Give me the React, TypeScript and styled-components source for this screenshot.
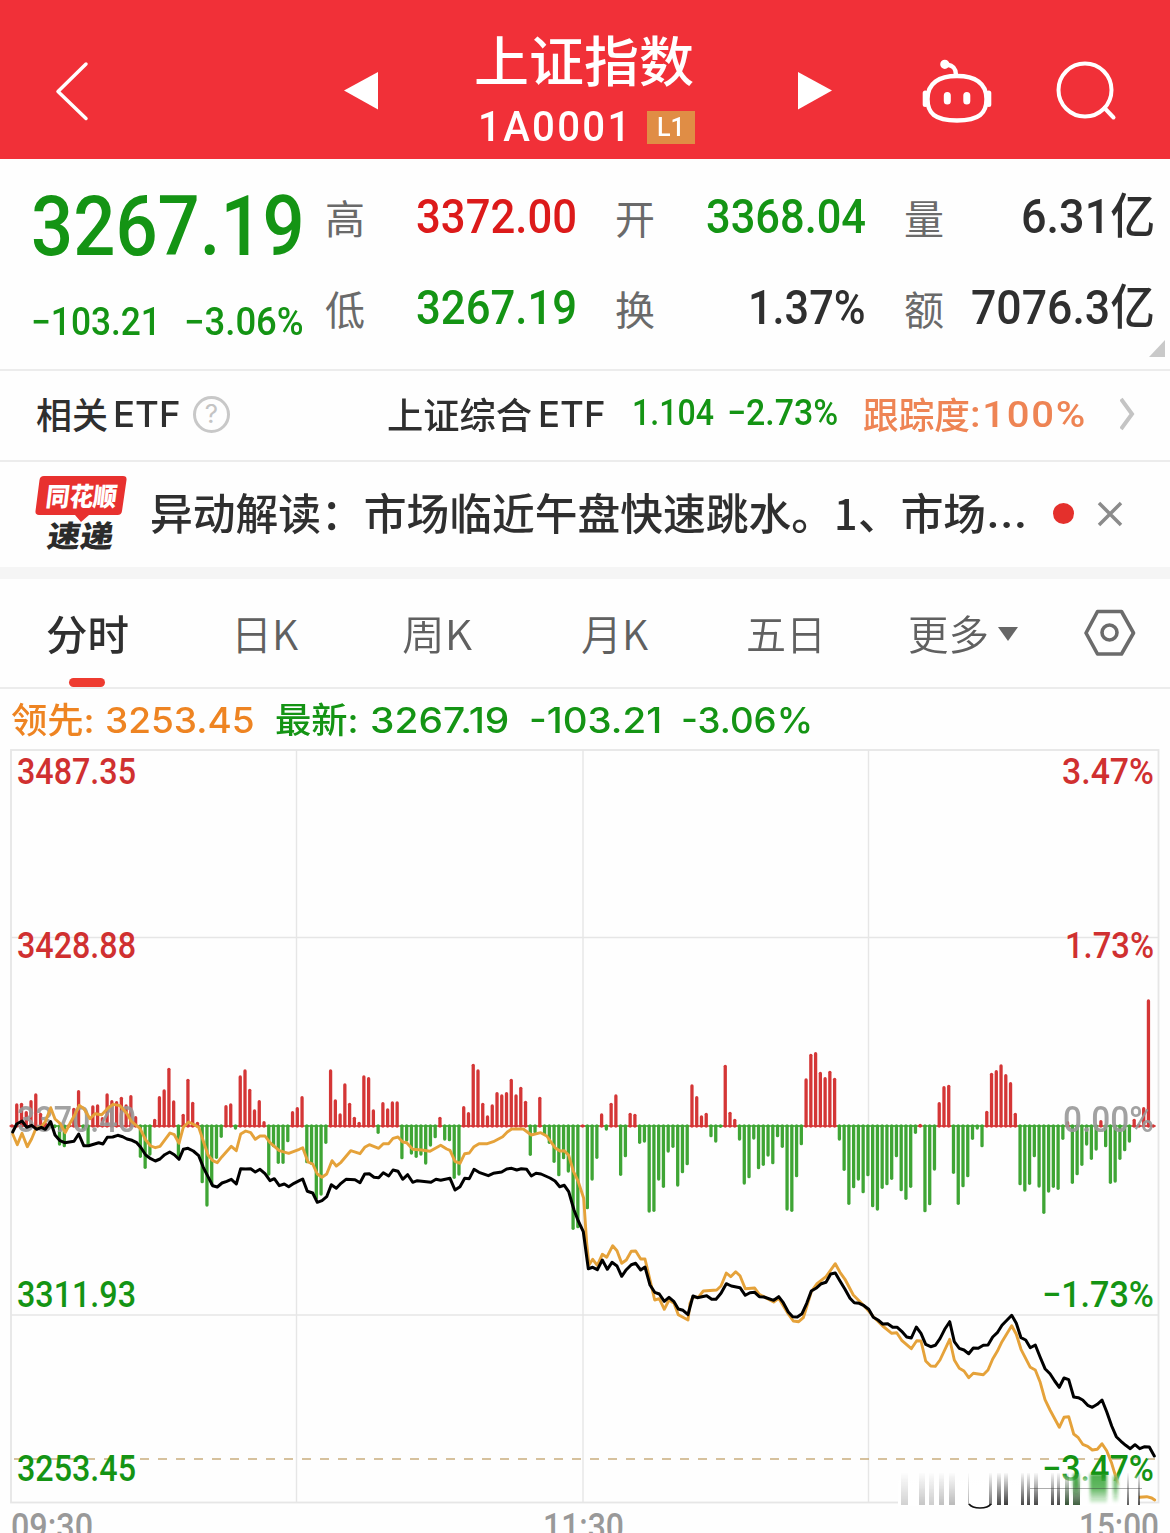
import React, { useLayoutEffect, useRef, useState } from "react";
import styled, { createGlobalStyle } from "styled-components";

const GREEN = "#149414";
const RED = "#dc1a1a";
const INK = "#2f2f2f";

const din = `Roboto, "Noto Sans CJK SC", sans-serif`;
const ui = `Inter, "Noto Sans CJK SC", sans-serif`;
const cjk = `"Noto Sans CJK SC", sans-serif`;

const GlobalStyle = createGlobalStyle`
  body { margin: 0; background: #fff; }
  * { box-sizing: border-box; }
`;

/* ---------- text fitted to a column ---------- */
const FitBox = styled.span<{ $w: number; $ml: number; $dy: number }>`
  display: block;
  flex: none;
  width: ${(p) => p.$w}px;
  margin-left: ${(p) => p.$ml}px;
  margin-top: ${(p) => p.$dy}px;
`;
const FitInner = styled.span<{ $size: number; $weight: number; $color: string; $font: string; $ls: number }>`
  display: inline-block;
  white-space: pre;
  transform-origin: 0 50%;
  vertical-align: top;
  font: ${(p) => p.$weight} ${(p) => p.$size}px/1 ${(p) => p.$font};
  letter-spacing: ${(p) => p.$ls}px;
  color: ${(p) => p.$color};
`;
type FitProps = {
  w: number;
  size: number;
  ml?: number;
  dy?: number;
  weight?: number;
  color?: string;
  font?: string;
  ls?: number;
  children: React.ReactNode;
};
function Fit({ w, size, ml = 0, dy = 0, weight = 500, color = INK, font = cjk, ls = 0, children }: FitProps) {
  const ref = useRef<HTMLSpanElement>(null);
  const [scale, setScale] = useState(1);
  useLayoutEffect(() => {
    const el = ref.current;
    if (el && el.offsetWidth) setScale(w / el.offsetWidth);
  }, [w, size]);
  return (
    <FitBox $w={w} $ml={ml} $dy={dy}>
      <FitInner ref={ref} $size={size} $weight={weight} $color={color} $font={font} $ls={ls} style={{ transform: `scaleX(${scale})` }}>
        {children}
      </FitInner>
    </FitBox>
  );
}

/* ---------- layout ---------- */
const Page = styled.main`
  width: 1170px;
  height: 1533px;
  overflow: hidden;
  background: #fefefe;
  display: flex;
  flex-direction: column;
`;
const Header = styled.header`
  flex: none;
  height: 159px;
  background: #f13038;
  display: grid;
  grid-template-columns: 344px 130px 322px 124px 136px 1fr;
`;
const IconCell = styled.div<{ $top: number; $left?: number }>`
  padding: ${(p) => p.$top}px 0 0 ${(p) => p.$left ?? 0}px;
  svg { display: block; }
`;
const TitleBlock = styled.div`
  padding-top: 32px;
`;
const CodeLine = styled.div`
  display: flex;
  align-items: center;
  margin-top: 23px;
  height: 36px;
`;
const Badge = styled.span`
  margin-left: 14px;
  width: 48px;
  height: 33px;
  background: #e08d45;
  display: flex;
  align-items: center;
`;
const Quote = styled.section`
  flex: none;
  height: 212px;
  border-bottom: 2px solid #ececec;
  display: grid;
  grid-template-columns: 325px 290px 289px 266px;
`;
const PriceCol = styled.div`
  padding: 26px 0 0 31px;
`;
const ChangeLine = styled.div`
  display: flex;
  margin-top: 34px;
`;
const StatCol = styled.div`
  padding-top: 35px;
  display: flex;
  flex-direction: column;
  gap: 43px;
`;
const Stat = styled.div`
  height: 48px;
  display: flex;
  align-items: center;
`;
const Corner = styled.i`
  align-self: flex-end;
  margin: -36px 5px 0 0;
  border-left: 16px solid transparent;
  border-bottom: 17px solid #c9c9c9;
`;
const EtfRow = styled.section`
  flex: none;
  height: 91px;
  border-bottom: 2px solid #ececec;
  display: flex;
  align-items: center;
  padding: 0 0 3px 36px;
`;
const Help = styled.span`
  flex: none;
  width: 37px;
  height: 37px;
  margin-left: 13px;
  border: 3px solid #c8c8c8;
  border-radius: 50%;
  display: flex;
  justify-content: center;
  align-items: center;
  font: 400 26px/1 ${ui};
  color: #c4c4c4;
`;
const More = styled.svg`
  flex: none;
  margin-left: 33px;
`;
const NewsRow = styled.section`
  flex: none;
  height: 117px;
  border-bottom: 12px solid #f5f5f5;
  display: flex;
  align-items: center;
  padding: 0 0 2px 32px;
`;
const LogoSvg = styled.svg`
  flex: none;
  overflow: visible;
`;
const Dot = styled.span`
  flex: none;
  width: 21px;
  height: 21px;
  margin-left: 26px;
  border-radius: 50%;
  background: #e4302c;
`;
const Close = styled.svg`
  flex: none;
  margin-left: 23px;
`;
const Tabs = styled.nav`
  flex: none;
  height: 110px;
  border-bottom: 2px solid #ececec;
  display: grid;
  grid-template-columns: 231px 171px 179px 165px 162px 176px 1fr;
`;
const Tab = styled.div<{ $left?: number }>`
  display: flex;
  align-items: flex-start;
  padding: 33px 0 0 ${(p) => p.$left ?? 0}px;
`;
const ActiveTab = styled(Tab)`
  flex-direction: column;
`;
const Marker = styled.i`
  width: 36px;
  height: 9px;
  border-radius: 5px;
  background: #ee3b30;
  margin: 25px 0 0 23px;
`;
const Caret = styled.i`
  margin: 15px 0 0 9px;
  border: 10px solid transparent;
  border-top: 14px solid #666;
  border-bottom: 0;
`;
const Legend = styled.div`
  flex: none;
  height: 59px;
  display: flex;
  align-items: center;
  padding: 4px 0 0 11px;
`;
const ChartSvg = styled.svg`
  display: block;
  flex: none;
  overflow: visible;
`;

/* ---------- icons ---------- */
const Robot = () => (
  <svg width="76" height="66" viewBox="920 58 76 66" fill="none" stroke="#fff" strokeWidth="4.4" strokeLinecap="round">
    <path d="M957 76c-18 0-29.500 7-29.500 23 0 14 7 21.500 29.500 21.500s29.500-7.500 29.500-21.500c0-16-11.500-23-29.500-23Z" />
    <path d="M956 75c0-7-3-9.500-9-10.500" />
    <circle cx="944.800" cy="64.300" r="2.400" fill="#fff" />
    <path d="M925.200 93v11.500M988.800 93v11.500" strokeWidth="5" />
    <path d="M947.300 95.500v5.500M966.800 95.500v5.500" strokeWidth="7" />
  </svg>
);

const Logo = () => (
  <LogoSvg width="98" height="80" viewBox="32 473 98 80">
    <path d="M44 475h79q4 0 3.500 4l-4.500 31q-.5 4-4.500 4H89l-8 7-6-7H39q-4 0-3.500-4l4-31q.5-4 4.500-4Z" fill="#e8312f" />
    <g fontFamily={cjk} fontWeight="900">
      <text transform="translate(45 505) skewX(-7)" fontSize="26" fill="#fff" textLength="71" lengthAdjust="spacingAndGlyphs">同花顺</text>
      <text transform="translate(46 546) skewX(-9)" fontSize="30" fill="#2b2b2b" textLength="66" lengthAdjust="spacingAndGlyphs">速递</text>
    </g>
  </LogoSvg>
);

/* ---------- chart data, in thirds of a pixel ---------- */
const bars = [
  0, 66, 68, 43, 76, 96, 38, 10, -2, -5, -57, -62, 5, 53, 106, -10, -55, 60, 63, 25, 96, 76, 73, 86, 63, 91, 28, -94, -127, -87,
  20, 88, 108, 173, 75, -90, 35, 140, 71, 11, -170, -240, -177, -97, -34, 61, 66, -9, 150, 168, 110, 48, 76, 13, -147, -62, -112, -112, -47, 43,
  55, 88, -110, -115, -220, -207, -52, 168, 78, 36, 126, 68, 26, 11, 150, 145, 48, -22, 70, 51, 72, 72, -98, -45, -84, -94, -87, -114, -60, -35,
  26, -42, -44, -157, -147, 58, 40, 185, 168, 68, 30, 63, 100, 93, 100, 140, 93, 116, 74, -88, -20, 86, -25, -52, -109, -149, -98, -138, -310, -305,
  2, -248, -162, -97, 36, -12, 68, 93, -148, -92, 38, 35, -52, -48, -258, -256, -162, -184, -78, -64, -180, -140, -116, 123, 88, 30, 38, -32, -48, -4,
  182, 41, 20, -42, -174, -155, -39, -128, -118, -90, -113, -32, -64, -252, -256, -152, -56, 141, 215, 220, 161, 145, 164, 143, -42, -133, -235, -185, -162, -200,
  -149, -242, -252, -187, -176, -160, -92, -194, -220, -184, -22, 5, -257, -236, -132, 70, 118, 122, -142, -235, -182, -152, -40, -9, -62, 44, 158, 166, 183, 154,
  130, 38, -176, -195, -175, -92, -183, -262, -198, -184, -190, -40, 13, -172, -146, -118, -57, -100, -72, 16, -62, -172, -168, -100, -74, -48, 20, 5, 55, 378, 3,
];

type Segment = { ox: number; oy: number; pts: string };
const indexLine: Segment[] = [
  { ox: 0, oy: 3120, pts: "38,276 50,252 66,243 80,262 95,256 110,268 124,262 136,268 152,245 165,285 180,302 194,308 222,304 236,282 251,317 266,317 296,308 309,312 322,292 338,291 353,286 368,290 381,297 396,301 410,308 422,322 437,345 452,356 466,363 480,357 494,344 509,336 523,344 537,358 550,328 564,325 580,333 596,347 610,382 624,410 638,437 652,441 666,429 680,424 694,418 709,432 722,386 737,387 752,386 766,396 780,388 795,401 810,422 823,416 838,437 853,432 866,440 882,430 898,422" },
  { ox: 900, oy: 3120, pts: "8,417 22,454 38,459 52,487 66,482 80,470 94,434 109,445 123,430 138,418 165,419 180,428 194,402 208,401 222,412 236,413 250,398 266,408 279,390 294,394 308,418 323,404 338,427 352,422 393,427 408,418 422,421 450,415 465,450 480,440 494,415 508,416 522,388 537,397 565,407 580,400 605,396 620,387 635,385 650,390 664,386 680,388 694,408 708,400 723,402 750,414 765,423 779,440 793,436 806,455 822,510 835,543 850,575 865,686" },
  { ox: 1770, oy: 3120, pts: "8,682 22,689 37,660 52,688 66,667 81,678 95,709 109,689 124,674 137,670 152,690 165,681 180,735 194,757 208,762 223,784 237,772 252,785 265,807 279,811 294,824 309,768 322,773 350,767 365,778 378,778 393,760 409,731 424,738 450,743 466,766 480,758 494,757 508,770 522,771 551,781 566,770 580,788 595,816 608,830 622,831 636,821 650,790 664,753 678,745 694,731 708,727 722,702 736,699 750,723 765,748 780,775 793,788 808,790 822,797 836,808 850,832 864,840 878,852 893,851" },
  { ox: 2550, oy: 3870, pts: "128,112 142,112 155,124 170,141 184,144 199,111 213,130 227,163 242,170 256,166 270,146 284,118 299,95 313,155 328,175 342,180 356,191 370,174 385,175 400,166 414,165 428,141 442,128 456,106 485,76 499,100 513,143 527,150 541,173 556,165 570,200 585,236 600,251 614,273 628,292 642,264 656,269 671,321 685,323 698,330 713,346 727,352 742,343 756,330 770,365 785,408 799,440 813,454 827,466 841,476 855,464 869,476 884,470 898,471 913,498" },
];
const leadLine: Segment[] = [
  { ox: 0, oy: 3120, pts: "38,282 52,314 66,280 82,320 95,296 108,265 122,262 136,245 152,203 165,237 180,250 196,278 210,250 224,225 238,196 252,206 270,236 285,221 305,224 325,203 340,193 360,197 380,220 395,245 420,265 437,300 452,318 466,323 480,319 500,292 510,279 523,284 537,310 550,262 566,246 580,253 596,262 612,310 624,345 638,362 652,368 666,350 694,319 709,332 722,282 737,273 752,278 766,298 780,288 795,288 810,308 838,332 866,340 898,328" },
  { ox: 900, oy: 3120, pts: "8,323 24,366 38,372 52,402 66,412 80,402 96,362 109,378 123,367 152,332 180,341 194,322 208,314 236,325 250,311 266,311 279,295 294,291 308,306 320,308 338,328 365,330 390,334 422,316 440,327 450,331 465,364 480,370 494,341 508,339 522,320 537,311 562,311 580,305 608,290 622,276 635,267 670,267 694,285 722,278 740,288 765,323 780,333 793,332 806,346 820,393 835,425 851,475 860,610 867,675" },
  { ox: 1770, oy: 3120, pts: "8,658 22,676 37,643 50,652 68,617 81,632 95,670 109,660 124,634 137,633 152,657 165,657 180,720 194,780 208,776 223,808 237,780 252,790 265,824 294,840 300,790 309,770 325,772 340,753 380,750 393,738 409,699 422,710 437,695 450,707 466,746 494,744 508,763 551,786 566,775 595,822 610,843 626,845 640,833 664,755 680,732 708,710 736,671 750,697 765,718 790,765 822,797 836,813 850,830" },
  { ox: 2550, oy: 3870, pts: "98,108 125,130 140,128 156,152 184,176 200,152 213,153 227,213 242,228 256,229 270,210 299,148 313,210 328,235 342,243 356,263 370,250 400,254 414,240 428,207 442,184 456,155 485,107 499,133 513,178 541,232 556,240 570,275 585,329 600,360 628,412 642,382 656,380 671,432 685,443 698,463 713,469 727,480 742,478 756,461 770,482 785,520 800,570 815,610 868,622 890,620 905,624 914,630" },
];
const toPoints = (segments: Segment[]) =>
  segments
    .flatMap((s) =>
      s.pts.split(" ").map((pair) => {
        const [x, y] = pair.split(",").map(Number);
        return `${((x + s.ox) / 3).toFixed(1)},${((y + s.oy) / 3).toFixed(1)}`;
      }),
    )
    .join(" ");

/* x, width, opacity, colour of each streak in the worn corner */
const streaks: [number, number, number, string][] = [
  [901, 7, 0.28, "#555"], [919, 6, 0.35, "#555"], [929, 5, 0.3, "#555"], [939, 5, 0.35, "#444"], [949, 6, 0.38, "#444"],
  [968, 1, 0.4, "#333"], [989, 3, 0.65, "#222"], [997, 4, 0.8, "#111"], [1004, 4, 0.85, "#111"], [1021, 3, 0.8, "#111"],
  [1027, 3, 0.8, "#111"], [1034, 4, 0.8, "#111"], [1051, 3, 0.8, "#111"], [1057, 3, 0.8, "#111"], [1065, 4, 0.9, "#173817"],
  [1073, 7, 0.85, "#174017"], [1127, 2, 0.7, "#111"], [1138, 2, 0.75, "#111"],
];

type LabelProps = { x: number; y: number; w: number; color: string; children: string };
const AxisLabel = ({ x, y, w, color, children }: LabelProps) => (
  <text x={x} y={y} fill={color} fontSize="36" fontWeight="500" fontFamily={din} textLength={w} lengthAdjust="spacingAndGlyphs">
    {children}
  </text>
);

const Chart = () => (
  <ChartSvg width="1170" height="785" viewBox="0 748 1170 785">
    <defs>
      <linearGradient id="fade" x1="0" y1="0" x2="0" y2="1">
        <stop offset="0" stopColor="#fff" stopOpacity="0" />
        <stop offset="0.4" stopColor="#fff" stopOpacity="1" />
      </linearGradient>
      <linearGradient id="mask-fade" x1="0" y1="0" x2="0" y2="1">
        <stop offset="0" stopColor="#fff" stopOpacity="0.03" />
        <stop offset="1" stopColor="#fff" stopOpacity="1" />
      </linearGradient>
      <linearGradient id="leaf" x1="0" y1="0" x2="0" y2="1">
        <stop offset="0" stopColor="#149414" stopOpacity="0.75" />
        <stop offset="0.5" stopColor="#149414" stopOpacity="0.65" />
        <stop offset="1" stopColor="#149414" stopOpacity="0.1" />
      </linearGradient>
      <filter id="soft" x="-50%" y="-20%" width="200%" height="140%">
        <feGaussianBlur stdDeviation="1.6" />
      </filter>
      <mask id="streak-mask" maskUnits="userSpaceOnUse" x="890" y="1470" width="260" height="40">
        <rect x="890" y="1473" width="260" height="33" fill="url(#mask-fade)" />
      </mask>
    </defs>
    <g stroke="#e6e6e6" strokeWidth="1.4" fill="none">
      <rect x="11" y="750" width="1147.500" height="752.500" strokeWidth="1.8" />
      <path d="M296.500 750V1502M583 750V1502M868.500 750V1502M11 937.500H1158M11 1315H1158" />
    </g>
    <path d="M14 1459H1155" stroke="#c9ad7e" strokeWidth="1.6" strokeDasharray="9 9" />
    <g strokeWidth="3.300" strokeLinecap="round">
      {bars.map((v, i) => {
        const x = 12 + i * 4.755;
        const color = v >= 0 ? "#d43636" : "#3fa535";
        return (
          <g key={i} stroke={color}>
            <path d={`M${x - 2.4} 1126H${x + 2.4}`} strokeWidth="1.8" strokeLinecap="butt" />
            <path d={`M${x} 1126V${1126 - (v > 0 ? Math.max(v - 3, 0) : v + 3 < 0 ? v + 3 : 0) / 3}`} />
          </g>
        );
      })}
    </g>
    <AxisLabel x={17} y={784} w={119} color="#d03030">3487.35</AxisLabel>
    <AxisLabel x={17} y={958} w={119} color="#d03030">3428.88</AxisLabel>
    <g opacity="0.9">
      <AxisLabel x={17} y={1132} w={119} color="#999">3370.40</AxisLabel>
      <AxisLabel x={1063} y={1132} w={91} color="#999">0.00%</AxisLabel>
    </g>
    <AxisLabel x={17} y={1307} w={119} color={GREEN}>3311.93</AxisLabel>
    <AxisLabel x={17} y={1481} w={119} color={GREEN}>3253.45</AxisLabel>
    <AxisLabel x={1062} y={784} w={92} color="#d03030">3.47%</AxisLabel>
    <AxisLabel x={1065} y={958} w={89} color="#d03030">1.73%</AxisLabel>
    <AxisLabel x={1042} y={1307} w={112} color={GREEN}>−1.73%</AxisLabel>
    <AxisLabel x={1042} y={1481} w={112} color={GREEN}>−3.47%</AxisLabel>
    <AxisLabel x={11} y={1539} w={82} color="#999">09:30</AxisLabel>
    <AxisLabel x={543} y={1539} w={81} color="#999">11:30</AxisLabel>
    <AxisLabel x={1079} y={1539} w={80} color="#999">15:00</AxisLabel>
    <polyline points={toPoints(leadLine)} fill="none" stroke="#e5a23a" strokeWidth="2.900" strokeLinejoin="round" strokeLinecap="round" />
    <polyline points={toPoints(indexLine)} fill="none" stroke="#000" strokeWidth="3" strokeLinejoin="round" strokeLinecap="round" />
    <rect x="898" y="1473" width="241" height="33" fill="url(#fade)" />
    <g mask="url(#streak-mask)">
      {streaks.map(([x, w, o, c]) => (
        <rect key={x} x={x} y="1473" width={w} height="32" fill={c} opacity={o} />
      ))}
    </g>
    <g filter="url(#soft)">
      <rect x="1073" y="1474" width="6" height="22" fill="url(#leaf)" />
      <rect x="1090" y="1474" width="17" height="29" fill="url(#leaf)" />
      <rect x="1113" y="1476" width="5" height="26" fill="url(#leaf)" opacity="0.8" />
    </g>
    <path d="M969 1504q3 4 11 4t11-4" fill="none" stroke="#111" strokeWidth="1.600" />
    <path d="M1030 1488.500H1142" stroke="#333" strokeOpacity="0.4" strokeWidth="1.200" />
  </ChartSvg>
);

export default function App() {
  return (
    <>
      <GlobalStyle />
      <Page>
        <Header>
          <IconCell $top={60} $left={52}>
            <svg width="40" height="64" fill="none" stroke="#fff" strokeWidth="3.500" strokeLinecap="round" strokeLinejoin="round">
              <path d="M34 4 6 31.500 34 58.500" />
            </svg>
          </IconCell>
          <IconCell $top={72}>
            <svg width="36" height="38"><path d="M0 18.500 34 0V37.500Z" fill="#fff" /></svg>
          </IconCell>
          <TitleBlock>
            <Fit w={220} size={54} color="#fff" weight={500}>上证指数</Fit>
            <CodeLine>
              <Fit w={155} ml={4} size={42} color="#fff" weight={500} font={din} ls={2.4}>1A0001</Fit>
              <Badge>
                <Fit w={28} ml={10} size={26} color="#fff" weight={500} font={din}>L1</Fit>
              </Badge>
            </CodeLine>
          </TitleBlock>
          <IconCell $top={72} $left={2}>
            <svg width="36" height="38"><path d="M34 18.500 0 0V37.500Z" fill="#fff" /></svg>
          </IconCell>
          <IconCell $top={58}><Robot /></IconCell>
          <IconCell $top={58}>
            <svg width="64" height="66" fill="none" stroke="#fff" strokeWidth="4" strokeLinecap="round">
              <ellipse cx="29" cy="32" rx="26.500" ry="26.500" />
              <path d="m48.500 50 9 9.500" />
            </svg>
          </IconCell>
        </Header>

        <Quote>
          <PriceCol>
            <Fit w={274} size={84} color={GREEN} font={din}>3267.19</Fit>
            <ChangeLine>
              <Fit w={130} size={38} color={GREEN} font={din}>−103.21</Fit>
              <Fit w={120} ml={23} size={38} color={GREEN} font={din}>−3.06%</Fit>
            </ChangeLine>
          </PriceCol>
          <StatCol>
            <Stat>
              <Fit w={40} dy={-2} size={40} color="#6a6a6a" weight={400}>高</Fit>
              <Fit w={161} ml={51} dy={-2} size={48} color={RED} font={din}>3372.00</Fit>
            </Stat>
            <Stat>
              <Fit w={40} dy={-2} size={40} color="#6a6a6a" weight={400}>低</Fit>
              <Fit w={161} ml={51} dy={-2} size={48} color={GREEN} font={din}>3267.19</Fit>
            </Stat>
          </StatCol>
          <StatCol>
            <Stat>
              <Fit w={40} dy={-2} size={40} color="#6a6a6a" weight={400}>开</Fit>
              <Fit w={160} ml={51} dy={-2} size={48} color={GREEN} font={din}>3368.04</Fit>
            </Stat>
            <Stat>
              <Fit w={40} dy={-2} size={40} color="#6a6a6a" weight={400}>换</Fit>
              <Fit w={118} ml={93} dy={-2} size={48} font={din}>1.37%</Fit>
            </Stat>
          </StatCol>
          <StatCol>
            <Stat>
              <Fit w={40} dy={-2} size={40} color="#6a6a6a" weight={400}>量</Fit>
              <Fit w={134} ml={77} dy={-2} size={48} font={din}>6.31亿</Fit>
            </Stat>
            <Stat>
              <Fit w={40} dy={-2} size={40} color="#6a6a6a" weight={400}>额</Fit>
              <Fit w={184} ml={27} dy={-2} size={48} font={din}>7076.3亿</Fit>
            </Stat>
            <Corner />
          </StatCol>
        </Quote>

        <EtfRow>
          <Fit w={72} dy={-3} size={36}>相关</Fit>
          <Fit w={67} ml={5} size={36} font={ui} weight={500}>ETF</Fit>
          <Help>?</Help>
          <Fit w={145} ml={157} dy={-3} size={36}>上证综合</Fit>
          <Fit w={67} ml={6} size={36} font={ui} weight={500}>ETF</Fit>
          <Fit w={82} ml={27} dy={-2} size={36} color={GREEN} font={din}>1.104</Fit>
          <Fit w={111} ml={13} dy={-2} size={36} color={GREEN} font={din}>−2.73%</Fit>
          <Fit w={107} ml={25} dy={-3} size={36} color="#ee8454">跟踪度</Fit>
          <Fit w={117} size={37} color="#ee8454" font={din} ls={1.6}>:100%</Fit>
          <More width="20" height="36" fill="none" stroke="#c4c4c4" strokeWidth="4">
            <path d="m1 3 11 15L1 33" />
          </More>
        </EtfRow>

        <NewsRow>
          <Logo />
          <Fit w={684} ml={20} dy={-4} size={43}>异动解读：市场临近午盘快速跳水。</Fit>
          <Fit w={24} dy={-4} size={43}>1</Fit>
          <Fit w={128} dy={-4} size={43}>、市场</Fit>
          <Fit w={41} size={41} font={ui} weight={500}>...</Fit>
          <Dot />
          <Close width="26" height="26" fill="none" stroke="#8b8b8b" strokeWidth="3.500">
            <path d="M2 2 24 24M24 2 2 24" />
          </Close>
        </NewsRow>

        <Tabs>
          <ActiveTab $left={46}>
            <Fit w={83} size={41}>分时</Fit>
            <Marker />
          </ActiveTab>
          <Tab><Fit w={67} size={41} weight={350} color="#606060">日K</Fit></Tab>
          <Tab><Fit w={70} size={41} weight={350} color="#606060">周K</Fit></Tab>
          <Tab><Fit w={67} size={41} weight={350} color="#606060">月K</Fit></Tab>
          <Tab><Fit w={80} size={41} weight={350} color="#606060">五日</Fit></Tab>
          <Tab>
            <Fit w={81} size={41} weight={350} color="#606060">更多</Fit>
            <Caret />
          </Tab>
          <IconCell $top={30}>
            <svg width="52" height="48" fill="none" stroke="#6b6b6b" strokeWidth="3.600" strokeLinejoin="round">
              <path d="M13.500 2.500h24l12 21.500-12 21h-24L2 24Z" />
              <circle cx="25.500" cy="23.500" r="7.500" />
            </svg>
          </IconCell>
        </Tabs>

        <Legend>
          <Fit w={84} size={35} color="#ee8422" font={ui}>领先:</Fit>
          <Fit w={150} ml={10} size={35} color="#ee8422" font={ui}>3253.45</Fit>
          <Fit w={84} ml={20} size={35} color={GREEN} font={ui}>最新:</Fit>
          <Fit w={139} ml={11} size={35} color={GREEN} font={ui}>3267.19</Fit>
          <Fit w={133} ml={20} size={35} color={GREEN} font={ui}>-103.21</Fit>
          <Fit w={132} ml={19} size={35} color={GREEN} font={ui}>-3.06%</Fit>
        </Legend>

        <Chart />
      </Page>
    </>
  );
}
